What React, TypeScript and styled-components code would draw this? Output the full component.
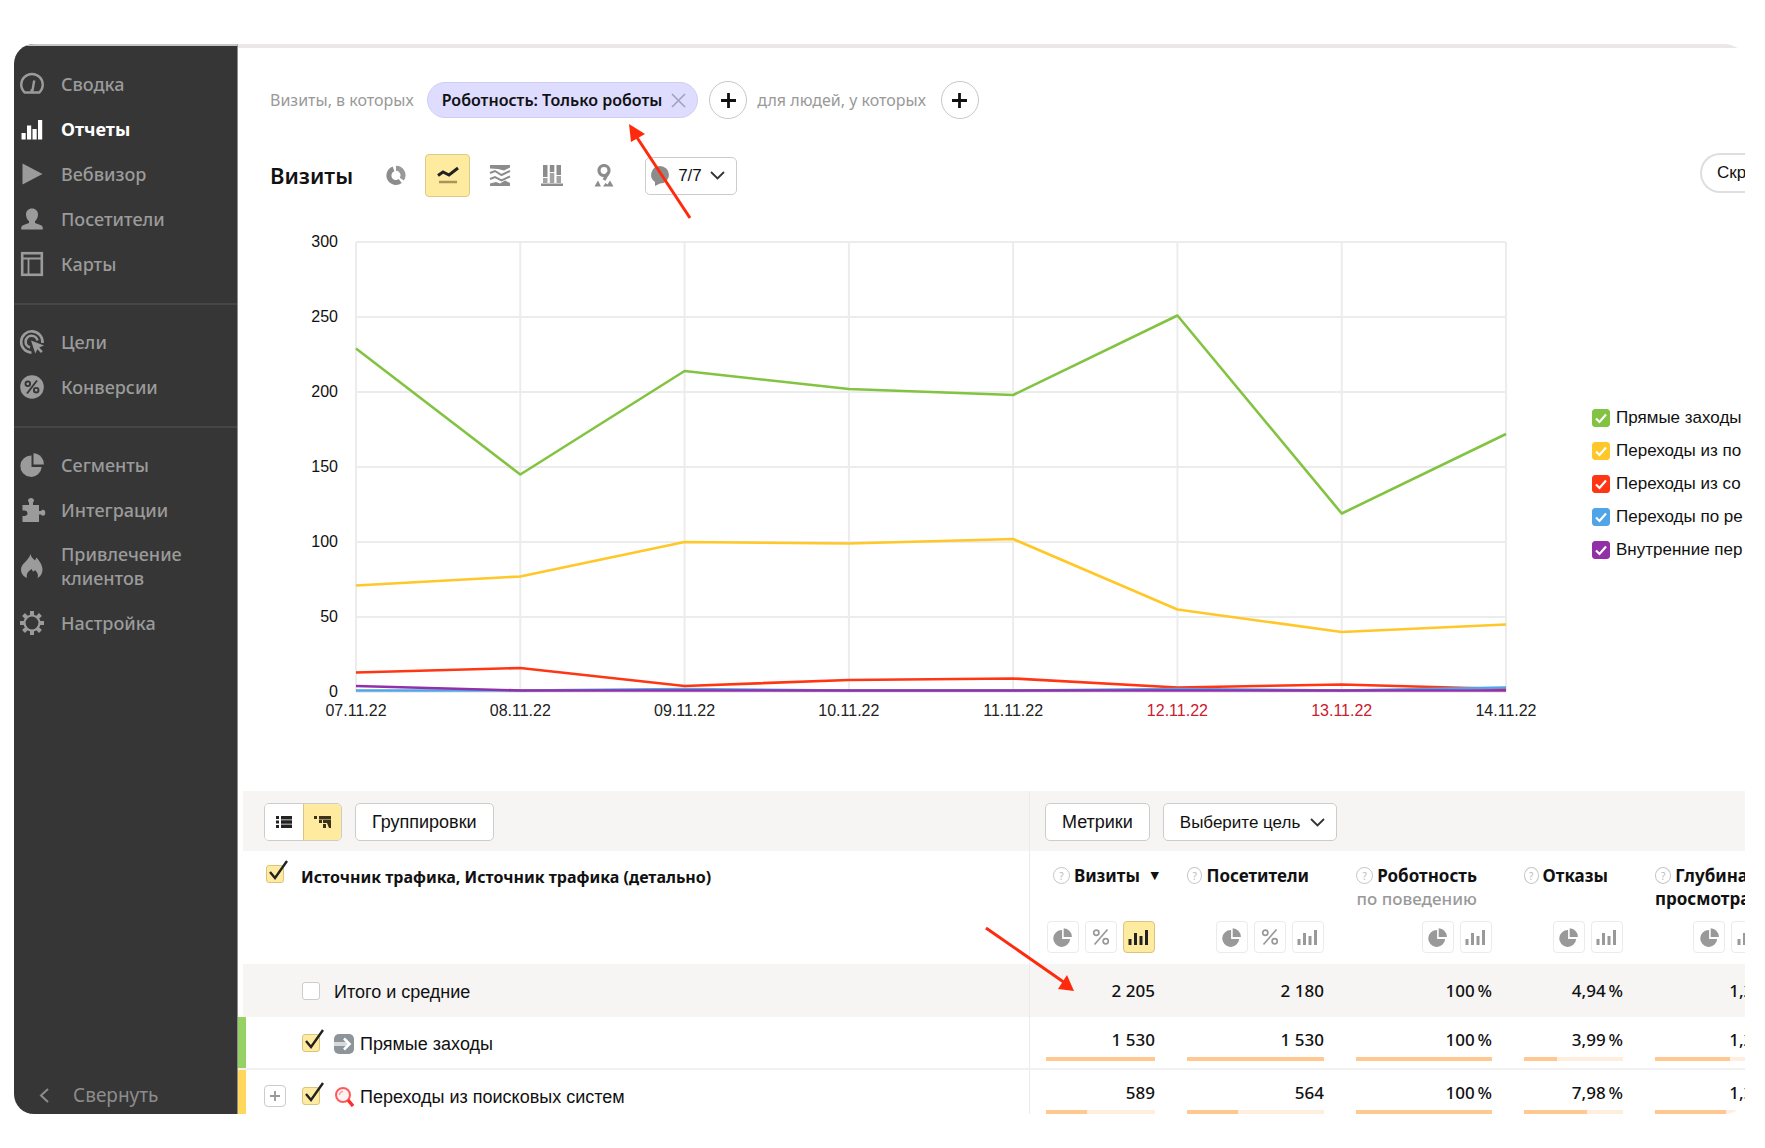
import React from "react";
import styled, { createGlobalStyle } from "styled-components";

const sans = `"Noto Sans", "Open Sans", sans-serif`;
const arial = `"Liberation Sans", Arial, sans-serif`;

const GlobalStyle = createGlobalStyle`
  * { box-sizing: border-box; }
  body { margin: 0; background: #fff; color: #111; font-family: ${sans}; }
  button, select, input { font-family: inherit; color: inherit; margin: 0; }
`;

/* ---------- shell ---------- */

const Page = styled.div`
  height: 100vh;
  padding: 44px 20px 34px 14px;
`;

const Frame = styled.div`
  position: relative;
  display: flex;
  height: 100%;
  overflow: hidden;
  border-radius: 20px;
`;

const Sidebar = styled.nav`
  flex: none;
  display: flex;
  flex-direction: column;
  width: 224px;
  padding-top: 1px;
  background: #363636;
  border-top: 2px solid #c9c6c7;
  border-right: 1px solid #8d8d8d;
`;

const NavGroup = styled.div`
  padding: 14px 0 17px;
  & + & {
    border-top: 2px solid #464646;
  }
`;

const NavLink = styled.a<{ $active?: boolean }>`
  display: flex;
  align-items: center;
  gap: 17px;
  min-height: 45px;
  padding: 10px 6px;
  color: ${(p) => (p.$active ? "#fff" : "#9b9b9b")};
  font-size: 18px;
  font-weight: ${(p) => (p.$active ? 700 : 500)};
  line-height: 24px;
  text-decoration: none;
  svg {
    flex: none;
  }
`;

const Collapse = styled.button`
  display: flex;
  align-items: center;
  gap: 24px;
  margin-top: auto;
  padding: 0 25px 7px;
  border: 0;
  background: none;
  color: #8c8c8c;
  font-size: 19px;
  line-height: 24px;
`;

const Main = styled.main`
  flex: 1;
  min-width: 0;
  border-top: 4px solid #ebe7e8;
`;

/* ---------- filters and title ---------- */

const FilterBar = styled.div`
  display: flex;
  align-items: center;
  padding: 33px 32px 0;
  color: #999;
  font-size: 16px;
  line-height: 24px;
  white-space: nowrap;
`;

const Chip = styled.span`
  display: flex;
  align-items: center;
  gap: 9px;
  height: 36px;
  margin: 0 11px 0 13px;
  padding: 0 11px 0 14px;
  border: 1px solid #cfcdf3;
  border-radius: 18px;
  background: #dedcff;
  color: #111;
  font-weight: 600;
`;

const BareButton = styled.button`
  display: flex;
  align-items: center;
  justify-content: center;
  padding: 0;
  border: 0;
  background: none;
`;

const RoundButton = styled(BareButton)<{ $end?: boolean }>`
  width: 38px;
  height: 38px;
  margin: ${(p) => (p.$end ? "0 0 0 15px" : "0 10px 0 0")};
  border: 1px solid #c8c8c8;
  border-radius: 50%;
  background: #fff;
`;

const TitleBar = styled.div`
  display: flex;
  align-items: center;
  margin-top: 35px;
  padding-left: 32px;
`;

const Title = styled.h1`
  margin: 0 20px 0 0;
  padding-bottom: 2px;
  font-size: 22px;
  font-weight: 600;
  line-height: 32px;
`;

const ChartTypes = styled.div`
  display: flex;
  gap: 7px;
`;

const TypeButton = styled(BareButton)<{ $active?: boolean }>`
  width: 45px;
  height: 43px;
  border: 1px solid ${(p) => (p.$active ? "#dccb85" : "transparent")};
  border-radius: 4px;
  background: ${(p) => (p.$active ? "#ffeba0" : "transparent")};
`;

const SelectBox = styled.span`
  position: relative;
  display: inline-flex;
  align-items: center;
`;

const SelectIcon = styled.span<{ $side: "left" | "right" }>`
  position: absolute;
  ${(p) => p.$side}: ${(p) => (p.$side === "left" ? 6 : 12)}px;
  display: flex;
  pointer-events: none;
`;

const Select = styled.select<{ $withIcon?: boolean }>`
  appearance: none;
  height: 38px;
  width: ${(p) => (p.$withIcon ? 92 : 174)}px;
  padding: 0 0 0 ${(p) => (p.$withIcon ? 32 : 16)}px;
  border: 1px solid #ccc;
  border-radius: 5px;
  background: #fff;
  font-family: ${arial};
  font-size: 17px;
`;

const CountSelect = styled(SelectBox)`
  margin-left: 19px;
`;

const HideButton = styled.button`
  flex: none;
  width: 45px;
  height: 40px;
  margin: -6px 0 0 auto;
  padding: 0 0 0 15px;
  border: solid #dedede;
  border-width: 2px 0 2px 2px;
  border-radius: 20px 0 0 20px;
  background: #fff;
  font-family: ${arial};
  font-size: 17px;
  text-align: left;
  white-space: nowrap;
  overflow: hidden;
`;

/* ---------- chart ---------- */

const ChartPanel = styled.section`
  display: flex;
  align-items: center;
  margin: 45px 0 69px;
  padding-left: 62px;
  font-family: ${arial};
  font-size: 16px;
  line-height: 22px;
`;

const YAxis = styled.div`
  align-self: flex-start;
  display: flex;
  flex-direction: column;
  justify-content: space-between;
  width: 38px;
  height: 472px;
  margin-top: -11px;
  text-align: right;
`;

const Plot = styled.div`
  flex: 1;
  min-width: 0;
  margin-left: 18px;
`;

const PlotSvg = styled.svg`
  display: block;
  width: 100%;
  height: 450px;
  overflow: visible;
`;

const XAxis = styled.div`
  display: flex;
  justify-content: space-between;
  margin-top: 8px;
`;

const XLabel = styled.span<{ $weekend: boolean }>`
  display: flex;
  justify-content: center;
  width: 0;
  color: ${(p) => (p.$weekend ? "#c8202f" : "#222")};
`;

const Legend = styled.div`
  flex: none;
  width: 153px;
  margin-left: 86px;
  padding-top: 3px;
  overflow: hidden;
`;

const LegendItem = styled.label`
  display: flex;
  align-items: center;
  gap: 6px;
  height: 33px;
  font-size: 17px;
  white-space: nowrap;
`;

/* ---------- check box ---------- */

const BoxHolder = styled.span`
  position: relative;
  flex: none;
  display: inline-flex;
  width: 18px;
  height: 18px;
`;

const BoxInput = styled.input<{ $fill: string; $line: string }>`
  appearance: none;
  width: 18px;
  height: 18px;
  border: 1px solid ${(p) => p.$line};
  border-radius: 3px;
  background: ${(p) => p.$fill};
`;

const Tick = styled.svg`
  position: absolute;
  left: 0;
  bottom: 0;
  overflow: visible;
  pointer-events: none;
`;

/* ---------- table ---------- */

const TableClip = styled.div`
  overflow: hidden;
`;

const Table = styled.table`
  width: calc(100% + 34px);
  table-layout: fixed;
  border-collapse: separate;
  border-spacing: 0;
  th,
  td {
    padding: 0;
    text-align: left;
    font-weight: 400;
  }
`;

const Col = styled.col<{ $w?: number }>`
  width: ${(p) => (p.$w ? `${p.$w}px` : "auto")};
`;

const Row = styled.tr<{ $h: number; $tint?: boolean; $lined?: boolean }>`
  height: ${(p) => p.$h}px;
  background: ${(p) => (p.$tint ? "#f6f5f3" : "#fff")};
  > * {
    border-bottom: ${(p) => (p.$lined ? "2px solid #f1f1f1" : "0")};
  }
`;

const LeadCell = styled.th<{ $mark?: string; $top?: boolean }>`
  vertical-align: ${(p) => (p.$top ? "top" : "middle")};
  border-right: 1px solid #ebebeb;
  box-shadow: inset ${(p) => (p.$mark ? 8 : 5)}px 0 0 ${(p) => p.$mark || "#fff"};
`;

const LeadRow = styled.div<{ $top?: boolean }>`
  display: flex;
  align-items: ${(p) => (p.$top ? "flex-start" : "center")};
  padding: ${(p) => (p.$top ? "14px 0 0 28px" : "0 0 0 26px")};
`;

const TableTitle = styled.span`
  margin-left: 17px;
  font-size: 16px;
  font-weight: 700;
  line-height: 24px;
`;

const ExpandSlot = styled.span`
  flex: none;
  display: flex;
  width: 38px;
`;

const ExpandButton = styled(BareButton)`
  width: 22px;
  height: 22px;
  border: 1px solid #ccc;
  border-radius: 4px;
  background: #fff;
`;

const RowLabel = styled.label`
  display: flex;
  align-items: center;
  gap: 6px;
  margin-left: 14px;
  padding-top: 3px;
  font-family: ${arial};
  font-size: 18px;
  line-height: 24px;
`;

const ToolRow = styled.div<{ $pad: number }>`
  display: flex;
  gap: 13px;
  padding: 2px 0 0 ${(p) => p.$pad}px;
`;

const ViewToggle = styled.div`
  display: flex;
  overflow: hidden;
  height: 38px;
  border: 1px solid #ccc;
  border-radius: 5px;
`;

const ToggleButton = styled(BareButton)<{ $active?: boolean }>`
  width: 38px;
  background: ${(p) => (p.$active ? "#ffeba0" : "#fff")};
  border-left: ${(p) => (p.$active ? "1px solid #d8c67f" : "0")};
`;

const ToolButton = styled.button`
  height: 38px;
  padding: 0 16px;
  border: 1px solid #ccc;
  border-radius: 5px;
  background: #fff;
  font-family: ${arial};
  font-size: 18px;
`;

const MetricHead = styled.th`
  vertical-align: top;
`;

const HeadInner = styled.div`
  display: flex;
  flex-direction: column;
  justify-content: space-between;
  height: 102px;
  padding: 13px 16px 0;
`;

const HeadName = styled.div`
  position: relative;
  padding-right: 15px;
  text-align: right;
  font-size: 17px;
  font-weight: 700;
  line-height: 23px;
  white-space: nowrap;
`;

const HeadLine = styled.div`
  display: flex;
  align-items: center;
  justify-content: flex-end;
  gap: 4px;
`;

const SubName = styled.div`
  color: #999;
  font-weight: 500;
`;

const SortMark = styled.span`
  position: absolute;
  right: -4px;
  top: 0;
  font-family: "DejaVu Sans", sans-serif;
  font-size: 11px;
`;

const Hint = styled.button`
  width: 17px;
  height: 17px;
  padding: 0;
  border: 1px solid #c6c6c6;
  border-radius: 50%;
  background: #fff;
  color: #bbb;
  font-size: 10px;
  line-height: 14px;
`;

const ModeRow = styled.div`
  display: flex;
  justify-content: flex-end;
  gap: 6px;
`;

const ModeButton = styled(BareButton)<{ $active?: boolean }>`
  width: 32px;
  height: 32px;
  border: 1px solid ${(p) => (p.$active ? "#d8c67f" : "#ebebeb")};
  border-radius: 4px;
  background: ${(p) => (p.$active ? "#ffeba0" : "#fff")};
  color: ${(p) => (p.$active ? "#222" : "#999")};
`;

const ValueCell = styled.td<{ $metered?: boolean }>`
  && {
    padding-top: ${(p) => (p.$metered ? 4 : 0)}px;
  }
  vertical-align: middle;
`;

const Value = styled.div`
  padding: 0 16px;
  text-align: right;
  font-size: 17px;
  font-weight: 500;
  line-height: 24px;
`;

const Meter = styled.div`
  height: 4px;
  margin: 5px 16px 0;
  background: #ffeedd;
`;

const MeterFill = styled.div`
  height: 4px;
  background: #ffc891;
`;

/* ---------- annotation ---------- */

const Arrow = styled.svg<{ $x: number; $y: number }>`
  position: absolute;
  left: ${(p) => p.$x}px;
  top: ${(p) => p.$y}px;
  overflow: visible;
  pointer-events: none;
`;

/* ---------- icons ---------- */

const PieShape = () => (
  <>
    <path d="M11.500 2.500A10.700 10.700 0 1 0 21.700 14H11.500Z" />
    <path d="M13.500 .3A10.800 10.800 0 0 1 23.800 11.500H13.500Z" />
  </>
);

const navIcons: Record<string, React.ReactNode> = {
  gauge: (
    <g fill="none" stroke="currentColor" strokeWidth="2.400" strokeLinejoin="round">
      <path d="M4.500 20.500A10.800 10.800 0 1 1 19.500 20.500Z" />
      <path d="M10.500 18.500h2L14.200 8.500" />
    </g>
  ),
  bars: <path d="M1.500 16h4.200v6.500H1.500zM7 8.500h4.200v14H7zM12.500 12h4.200v10.500h-4.200zM18 3h4.200v19.500H18z" />,
  play: <path d="M2.500 1.500 22.500 12l-20 10.500Z" />,
  person: <path d="M12 1.500c3.600 0 6 2.500 6 6 0 3-1.400 5.200-3 6.800v1.700l6 2.200c1.200.5 1.800 1.500 1.800 3v1.300H1.200v-1.300c0-1.500.6-2.500 1.800-3l6-2.200v-1.700c-1.600-1.600-3-3.800-3-6.800 0-3.500 2.400-6 6-6Z" />,
  layout: (
    <g fill="none" stroke="currentColor">
      <rect x="2.200" y="1.200" width="19.600" height="21.600" strokeWidth="2.600" />
      <path d="M2 6.500h20M8.500 6.500V23" strokeWidth="1.800" />
    </g>
  ),
  target: (
    <>
      <g fill="none" stroke="currentColor" strokeWidth="2.600">
        <path d="M22.500 13A10.700 10.700 0 1 0 11.500 22.700" />
        <path d="M17.500 10.500A6 6 0 1 0 10 17.500" />
      </g>
      <path d="m11 10.500 13 5-4.800 2 3.600 3.800-1.800 1.700-3.700-3.800-2 4.300Z" />
    </>
  ),
  percent: (
    <>
      <circle cx="12" cy="12" r="11.800" />
      <g fill="none" stroke="#363636" strokeWidth="1.900">
        <circle cx="7.800" cy="8.800" r="2.300" />
        <circle cx="16.200" cy="15.200" r="2.300" />
        <path d="m17 5.500-10 13" />
      </g>
    </>
  ),
  pie: <PieShape />,
  puzzle: <path d="M2.500 7H9V4.500C8.300 4 8 3.300 8 2.600 8 1.200 9.300 0 11 0s3 1.200 3 2.600c0 .7-.3 1.400-1 1.900V7h6v6h2c.5-.8 1.200-1.200 2-1.200 1.400 0 2.300 1.300 2.300 3s-.9 3-2.300 3c-.8 0-1.500-.4-2-1.200h-2V24H2.500v-6h2c1.700 0 3-1 3-2.700S6.200 12.500 4.500 12.500h-2Z" />,
  flame: <path d="M10.500 0c.5 3 2.500 4.500 4.500 6.500l1.500-3c3.500 4 6 8 6 12 0 3.600-1.500 6.700-5 8.500 1.300-3.500-.5-5.700-2.500-8-1 2-3 2-3-1C8 17 6 20 7 24c-3.800-1.500-6-4.800-6-8.500C1 9.500 8.500 7 10.500 0Z" />,
  gear: (
    <>
      <circle cx="12" cy="12" r="7.500" fill="none" stroke="currentColor" strokeWidth="2.200" />
      {[0, 45, 90, 135, 180, 225, 270, 315].map((a) => (
        <path key={a} d="M10 0h4v4.500h-4Z" transform={`rotate(${a} 12 12)`} />
      ))}
    </>
  ),
};

const NavIcon = ({ name }: { name: string }) => (
  <svg width="24" height="24" viewBox="0 0 24 24" fill="currentColor" overflow="visible" aria-hidden="true">
    {navIcons[name]}
  </svg>
);

const Chevron = () => (
  <svg width="15" height="9" viewBox="0 0 15 9" fill="none" stroke="#333" strokeWidth="1.800" aria-hidden="true">
    <path d="m1 1 6.500 6.500L14 1" />
  </svg>
);

const Plus = ({ size = 15, color = "#111" }: { size?: number; color?: string }) => (
  <svg width={size} height={size} viewBox="0 0 15 15" stroke={color} strokeWidth="2.800" aria-hidden="true">
    <path d="M7.500 0v15M0 7.500h15" />
  </svg>
);

const typeIcons: Record<string, React.ReactNode> = {
  donut: (
    <g fill="none" stroke="#8c8c8c" strokeWidth="5">
      <path d="M8.500 4.900A7 7 0 1 0 15.200 17" />
      <path d="M11 4.300A7 7 0 0 1 16.800 15.200" stroke="#999" />
    </g>
  ),
  line: (
    <>
      <path d="M1 10.500 6 7l6 3 9-7" fill="none" stroke="#222" strokeWidth="3" transform="translate(0 1)" />
      <path d="M2 18h18" stroke="#a8955a" strokeWidth="2.600" />
    </>
  ),
  area: (
    <g fill="#8c8c8c">
      <path d="M1 1h20v2.500l-6 3-6-1.500-8-.5Z" />
      <path d="M1 19.500 7 18l4 1.500 5-3 5 2.500v3H1Z" />
      <path d="m1 9 5-2 6.500 4L21 7M1 15l5-2 6.500 3.500 8.500-4" fill="none" stroke="#8c8c8c" strokeWidth="2" />
    </g>
  ),
  columns: (
    <>
      <path d="M0 19.500h22v2.500H0zM2 1h4.500v12H2zM8.800 1h4.500v7H8.800zM15.500 1H20v10h-4.500z" fill="#8c8c8c" />
      <path d="M2 14h4.500v5H2zM8.800 9h4.500v10H8.800zM15.500 12H20v7h-4.500z" fill="#a3a3a3" />
    </>
  ),
  map: (
    <>
      <circle cx="11" cy="6.500" r="5" fill="none" stroke="#8c8c8c" strokeWidth="3.200" />
      <path d="m15 9-4 7" stroke="#8c8c8c" strokeWidth="3.200" />
      <path d="M1.500 22.500 5 16.500l3 6ZM10 22.500l2.500-3.500 2 1.500 2.500-4 3.500 6Z" fill="#8c8c8c" />
    </>
  ),
};

const PieIcon = () => (
  <svg width="19" height="19" viewBox="0 0 24 24" fill="currentColor" aria-hidden="true">
    <PieShape />
  </svg>
);

const PercentIcon = () => (
  <svg width="18" height="18" viewBox="0 0 18 18" fill="none" stroke="currentColor" strokeWidth="1.700" aria-hidden="true">
    <circle cx="4.300" cy="4.800" r="2.600" />
    <circle cx="13.700" cy="13.200" r="2.600" />
    <path d="M15.500 1.500 2.500 16.500" />
  </svg>
);

const BarsIcon = () => (
  <svg width="21" height="15" viewBox="0 0 21 15" fill="currentColor" aria-hidden="true">
    <path d="M.5 9h3v6h-3zM6 3h3v12H6zM11.500 6h3v9h-3zM17 0h3v15h-3z" />
  </svg>
);

/* ---------- data ---------- */

const nav = [
  [
    { icon: "gauge", label: "Сводка" },
    { icon: "bars", label: "Отчеты", active: true },
    { icon: "play", label: "Вебвизор" },
    { icon: "person", label: "Посетители" },
    { icon: "layout", label: "Карты" },
  ],
  [
    { icon: "target", label: "Цели" },
    { icon: "percent", label: "Конверсии" },
  ],
  [
    { icon: "pie", label: "Сегменты" },
    { icon: "puzzle", label: "Интеграции" },
    { icon: "flame", label: "Привлечение клиентов" },
    { icon: "gear", label: "Настройка" },
  ],
] as { icon: string; label: string; active?: boolean }[][];

const days = ["07.11.22", "08.11.22", "09.11.22", "10.11.22", "11.11.22", "12.11.22", "13.11.22", "14.11.22"];
const ticks = [300, 250, 200, 150, 100, 50, 0];

const series = [
  { label: "Прямые заходы", color: "#82c341", data: [229, 145, 214, 202, 198, 251, 119, 172] },
  { label: "Переходы из по", color: "#ffc727", data: [71, 77, 100, 99, 102, 55, 40, 45] },
  { label: "Переходы из со", color: "#ff3614", data: [13, 16, 4, 8, 9, 3, 5, 2] },
  { label: "Переходы по ре", color: "#4fa5e8", data: [1, 1, 2, 1, 1, 2, 1, 3] },
  { label: "Внутренние пер", color: "#9230a8", data: [4, 1, 1, 1, 1, 1, 1, 1] },
];

const metrics = [
  { name: "Визиты", width: 141, modes: ["pie", "percent", "bars"], sorted: true },
  { name: "Посетители", width: 169, modes: ["pie", "percent", "bars"] },
  { name: "Роботность", width: 168, modes: ["pie", "bars"], sub: "по поведению" },
  { name: "Отказы", width: 131, modes: ["pie", "bars"] },
  { name: "Глубина", width: 140, modes: ["pie", "bars"], second: "просмотра" },
] as { name: string; width: number; modes: string[]; sorted?: boolean; sub?: string; second?: string }[];

const totals = ["2 205", "2 180", "100\u202f%", "4,94\u202f%", "1,22"];

const rows = [
  {
    label: "Прямые заходы",
    mark: "#96d163",
    values: ["1 530", "1 530", "100\u202f%", "3,99\u202f%", "1,22"],
    fill: [100, 100, 100, 33, 69],
  },
  {
    label: "Переходы из поисковых систем",
    mark: "#ffd75c",
    expandable: true,
    values: ["589", "564", "100\u202f%", "7,98\u202f%", "1,22"],
    fill: [38, 37, 100, 64, 66],
  },
];

const DirectIcon = () => (
  <svg width="20" height="20" viewBox="0 0 20 20" aria-hidden="true">
    <rect width="20" height="20" rx="5" fill="#8d959b" />
    <path d="M0 10h14" stroke="#d5dade" strokeWidth="4" />
    <path d="m10 4.500 5.500 5.500-5.500 5.500" fill="none" stroke="#fff" strokeWidth="2.600" />
  </svg>
);

const SearchIcon = () => (
  <svg width="20" height="20" viewBox="0 0 20 20" fill="none" aria-hidden="true">
    <circle cx="9" cy="8" r="7" fill="#fff3f3" stroke="#ff5a5a" strokeWidth="2" />
    <path d="M5.500 8A3.500 3.500 0 0 1 9 4.500" stroke="#ff9c9c" strokeWidth="1.500" />
    <path d="m14 13 5 6" stroke="#ff2d2d" strokeWidth="3.400" />
  </svg>
);

/* ---------- parts ---------- */

const YellowBox = ({ id, checked, label }: { id?: string; checked: boolean; label?: string }) => (
  <BoxHolder>
    <BoxInput
      id={id}
      type="checkbox"
      aria-label={label}
      defaultChecked={checked}
      $fill={checked ? "#ffeba0" : "#fff"}
      $line={checked ? "#d8c67f" : "#ccc"}
    />
    {checked && (
      <Tick width="22" height="22" viewBox="0 0 22 22" fill="none" stroke="#222" strokeWidth="2.400">
        <path d="m4 11 5 6L21 0" />
      </Tick>
    )}
  </BoxHolder>
);

const Chart = () => {
  const step = 1000 / (days.length - 1);
  return (
    <PlotSvg viewBox="0 0 1000 300" preserveAspectRatio="none" role="img" aria-label="Визиты">
      <g stroke="#ececec" strokeWidth="2">
        {ticks.map((t) => (
          <line key={t} x1="0" x2="1000" y1={t} y2={t} vectorEffect="non-scaling-stroke" />
        ))}
        {days.map((d, i) => (
          <line key={d} x1={i * step} x2={i * step} y1="0" y2="300" vectorEffect="non-scaling-stroke" />
        ))}
      </g>
      {series.map((s) => (
        <polyline
          key={s.label}
          points={s.data.map((v, i) => `${i * step},${300 - v}`).join(" ")}
          fill="none"
          stroke={s.color}
          strokeWidth="2.600"
          strokeLinejoin="round"
          vectorEffect="non-scaling-stroke"
        />
      ))}
    </PlotSvg>
  );
};

const modeIcon: Record<string, React.ReactNode> = {
  pie: <PieIcon />,
  percent: <PercentIcon />,
  bars: <BarsIcon />,
};

export default function App() {
  return (
    <Page>
      <GlobalStyle />
      <Frame>
        <Sidebar>
          {nav.map((group, i) => (
            <NavGroup key={i}>
              {group.map((item) => (
                <NavLink key={item.label} href="#" $active={item.active}>
                  <NavIcon name={item.icon} />
                  <span>{item.label}</span>
                </NavLink>
              ))}
            </NavGroup>
          ))}
          <Collapse type="button">
            <svg width="10" height="15" viewBox="0 0 10 15" fill="none" stroke="currentColor" strokeWidth="2" aria-hidden="true">
              <path d="M9 1 2 7.500 9 14" />
            </svg>
            Свернуть
          </Collapse>
        </Sidebar>

        <Main>
          <FilterBar>
            <span>Визиты, в которых</span>
            <Chip>
              Роботность: Только роботы
              <BareButton type="button" aria-label="Удалить">
                <svg width="15" height="15" viewBox="0 0 15 15" stroke="#a3a1bd" strokeWidth="1.600" aria-hidden="true">
                  <path d="m1 1 13 13M14 1 1 14" />
                </svg>
              </BareButton>
            </Chip>
            <RoundButton type="button" aria-label="Добавить условие">
              <Plus />
            </RoundButton>
            <span>для людей, у которых</span>
            <RoundButton type="button" aria-label="Добавить условие" $end>
              <Plus />
            </RoundButton>
          </FilterBar>

          <TitleBar>
            <Title>Визиты</Title>
            <ChartTypes>
              {Object.keys(typeIcons).map((k) => (
                <TypeButton key={k} type="button" aria-label={k} $active={k === "line"}>
                  <svg width="22" height="23" viewBox="0 0 22 23" aria-hidden="true">
                    {typeIcons[k]}
                  </svg>
                </TypeButton>
              ))}
            </ChartTypes>
            <CountSelect>
              <Select $withIcon aria-label="Комментарии">
                <option>7/7</option>
              </Select>
              <SelectIcon $side="left">
                <svg width="18" height="20" viewBox="0 0 18 20" fill="#8c8c8c" aria-hidden="true">
                  <path d="M9 0a9 8.800 0 0 1 0 17.600L4 20v-4A9 8.800 0 0 1 9 0Z" />
                </svg>
              </SelectIcon>
              <SelectIcon $side="right">
                <Chevron />
              </SelectIcon>
            </CountSelect>
            <HideButton type="button">Скр</HideButton>
          </TitleBar>

          <ChartPanel>
            <YAxis>
              {ticks.map((t) => (
                <span key={t}>{t}</span>
              ))}
            </YAxis>
            <Plot>
              <Chart />
              <XAxis>
                {days.map((d, i) => (
                  <XLabel key={d} $weekend={i === 5 || i === 6}>
                    {d}
                  </XLabel>
                ))}
              </XAxis>
            </Plot>
            <Legend>
              {series.map((s) => (
                <LegendItem key={s.label}>
                  <BoxHolder>
                    <BoxInput type="checkbox" defaultChecked $fill={s.color} $line={s.color} />
                    <Tick width="18" height="18" viewBox="0 0 18 18" fill="none" stroke="#fff" strokeWidth="2.200">
                      <path d="m4 9.500 3.500 3.500L14 5.500" />
                    </Tick>
                  </BoxHolder>
                  {s.label}
                </LegendItem>
              ))}
            </Legend>
          </ChartPanel>

          <TableClip>
            <Table>
              <colgroup>
                <Col />
                {metrics.map((m) => (
                  <Col key={m.name} $w={m.width} />
                ))}
              </colgroup>
              <thead>
                <Row $h={60} $tint>
                  <LeadCell>
                    <ToolRow $pad={26}>
                      <ViewToggle>
                        <ToggleButton type="button" aria-label="Список">
                          <svg width="16" height="12" viewBox="0 0 16 12" fill="#222" aria-hidden="true">
                            <path d="M0 0h3v3H0zM0 4.500h3v3H0zM0 9h3v3H0zM5 0h11v3.500H5zM5 4.200h11v3.600H5zM5 8.500h11V12H5z" />
                          </svg>
                        </ToggleButton>
                        <ToggleButton type="button" aria-label="Дерево" $active>
                          <svg width="17" height="12" viewBox="0 0 17 12" fill="#3a331a" aria-hidden="true">
                            <path d="M0 0h3v3H0zM5 0h12v3.500H5zM5 4h3v3H5zM9 4h8v3H9zM9 8h3v4H9zM13 7h4v5h-2z" />
                          </svg>
                        </ToggleButton>
                      </ViewToggle>
                      <ToolButton type="button">Группировки</ToolButton>
                    </ToolRow>
                  </LeadCell>
                  <th colSpan={5}>
                    <ToolRow $pad={15}>
                      <ToolButton type="button">Метрики</ToolButton>
                      <SelectBox>
                        <Select aria-label="Цель">
                          <option>Выберите цель</option>
                        </Select>
                        <SelectIcon $side="right">
                          <Chevron />
                        </SelectIcon>
                      </SelectBox>
                    </ToolRow>
                  </th>
                </Row>
                <Row $h={113}>
                  <LeadCell $top>
                    <LeadRow $top>
                      <YellowBox checked label="Выбрать все" />
                      <TableTitle>Источник трафика, Источник трафика (детально)</TableTitle>
                    </LeadRow>
                  </LeadCell>
                  {metrics.map((m) => (
                    <MetricHead key={m.name}>
                      <HeadInner>
                        <HeadName>
                          <HeadLine>
                            <Hint type="button">?</Hint>
                            {m.name}
                          </HeadLine>
                          {m.sub && <SubName>{m.sub}</SubName>}
                          {m.second && <div>{m.second}</div>}
                          {m.sorted && <SortMark>▼</SortMark>}
                        </HeadName>
                        <ModeRow>
                          {m.modes.map((k) => (
                            <ModeButton key={k} type="button" aria-label={k} $active={m.sorted && k === "bars"}>
                              {modeIcon[k]}
                            </ModeButton>
                          ))}
                        </ModeRow>
                      </HeadInner>
                    </MetricHead>
                  ))}
                </Row>
              </thead>
              <tbody>
                <Row $h={53} $tint>
                  <LeadCell>
                    <LeadRow>
                      <ExpandSlot />
                      <YellowBox id="row-total" checked={false} />
                      <RowLabel htmlFor="row-total">Итого и средние</RowLabel>
                    </LeadRow>
                  </LeadCell>
                  {totals.map((v, i) => (
                    <ValueCell key={i}>
                      <Value>{v}</Value>
                    </ValueCell>
                  ))}
                </Row>
                {rows.map((r, n) => (
                  <Row key={r.label} $h={53} $lined>
                    <LeadCell $mark={r.mark}>
                      <LeadRow>
                        <ExpandSlot>
                          {r.expandable && (
                            <ExpandButton type="button" aria-label="Развернуть">
                              <Plus size={10} color="#999" />
                            </ExpandButton>
                          )}
                        </ExpandSlot>
                        <YellowBox id={`row-${n}`} checked />
                        <RowLabel htmlFor={`row-${n}`}>
                          {n === 0 ? <DirectIcon /> : <SearchIcon />}
                          {r.label}
                        </RowLabel>
                      </LeadRow>
                    </LeadCell>
                    {r.values.map((v, i) => (
                      <ValueCell key={i} $metered>
                        <Value>{v}</Value>
                        <Meter>
                          <MeterFill style={{ width: `${r.fill[i]}%` }} />
                        </Meter>
                      </ValueCell>
                    ))}
                  </Row>
                ))}
              </tbody>
            </Table>
          </TableClip>
        </Main>

        <Arrow $x={614} $y={79} width="64" height="96" viewBox="0 0 64 96">
          <path d="M62 95 8 13" stroke="#ff2a0d" strokeWidth="3" />
          <path d="m1 1 16 10-14 8Z" fill="#ff2a0d" />
        </Arrow>
        <Arrow $x={971} $y={882} width="90" height="66" viewBox="0 0 90 66">
          <path d="M1 2 80 57" stroke="#ff2a0d" strokeWidth="3" />
          <path d="M89 65 82 49l-9 14Z" fill="#ff2a0d" />
        </Arrow>
      </Frame>
    </Page>
  );
}
